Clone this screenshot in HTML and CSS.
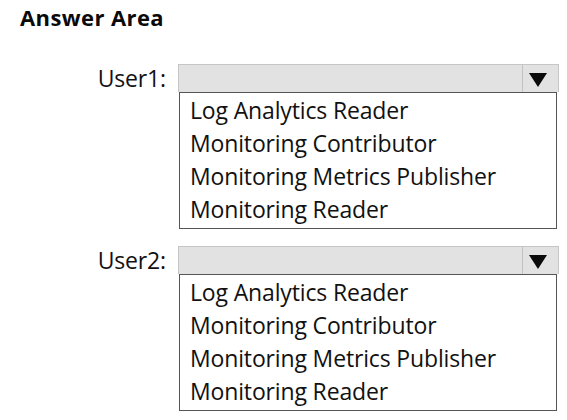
FILE: index.html
```html
<!DOCTYPE html>
<html>
<head>
<meta charset="utf-8">
<link rel="stylesheet" href="styles.css">
</head>
<body>
<div class="page">
  <h1 class="title">Answer Area</h1>
  <div class="rows">
    <div class="row">
      <div class="label">User1:</div>
      <div class="widget">
        <div class="combo">
          <div class="combo-value"></div>
          <div class="combo-btn"><span class="tri"></span></div>
        </div>
        <ul class="list">
          <li>Log Analytics Reader</li>
          <li>Monitoring Contributor</li>
          <li>Monitoring Metrics Publisher</li>
          <li>Monitoring Reader</li>
        </ul>
      </div>
    </div>
    <div class="row">
      <div class="label">User2:</div>
      <div class="widget">
        <div class="combo">
          <div class="combo-value"></div>
          <div class="combo-btn"><span class="tri"></span></div>
        </div>
        <ul class="list">
          <li>Log Analytics Reader</li>
          <li>Monitoring Contributor</li>
          <li>Monitoring Metrics Publisher</li>
          <li>Monitoring Reader</li>
        </ul>
      </div>
    </div>
  </div>
</div>
</body>
</html>
```
FILE: styles.css
```css
html, body {
  margin: 0;
  padding: 0;
  background: #ffffff;
}
body {
  font-family: "Open Sans", "Noto Sans", sans-serif;
  color: #111111;
  width: 567px;
  height: 420px;
  overflow: hidden;
}
.page {
  padding: 3px 0 0 20px;
}
.title {
  margin: 0;
  font-size: 22px;
  font-weight: 700;
  letter-spacing: 0.4px;
  line-height: 28px;
  color: #0a0a0a;
}
.rows {
  margin-top: 33px;
  display: flex;
  flex-direction: column;
  gap: 17px;
}
.row {
  display: flex;
  align-items: flex-start;
}
.label {
  width: 158px;
  box-sizing: border-box;
  text-align: right;
  font-size: 23px;
  letter-spacing: -0.15px;
  line-height: 24px;
  padding-top: 2px;
  padding-right: 12px;
}
.widget {
  width: 381px;
}
.combo {
  display: flex;
  height: 28px;
  box-sizing: border-box;
  border: 1px solid #c6c6c6;
  border-bottom: none;
  background: #e2e2e2;
}
.combo-value {
  flex: 1;
}
.combo-btn {
  width: 35px;
  border-left: 1px solid #c2c2c2;
  display: flex;
  align-items: center;
  justify-content: center;
}
.tri {
  width: 0;
  height: 0;
  border-left: 9px solid transparent;
  border-right: 9px solid transparent;
  border-top: 14px solid #0a0a0a;
  margin-top: 2px;
  margin-right: 6px;
}
.list {
  list-style: none;
  margin: 0 2px 0 1px;
  padding: 1px 0 2px 10px;
  border: 1px solid #555555;
  font-size: 23px;
  letter-spacing: -0.15px;
  line-height: 33px;
}
.list li {
  white-space: nowrap;
}
```
